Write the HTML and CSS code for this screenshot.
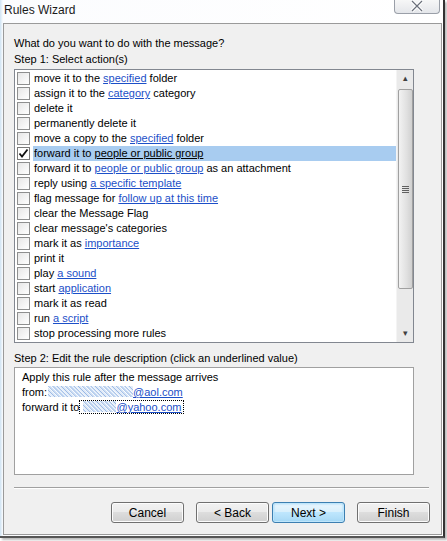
FILE: index.html
```html
<!DOCTYPE html>
<html>
  <head>
    <title>Rules Wizard</title>
    <meta charset="utf-8" />
    <link rel="stylesheet" href="styles.css">
  </head>
  <body>
    <div class="window">
      <div class="title_bar">
        <span class="title_text">Rules Wizard</span>
        <div class="close_button">
          <svg width="14" height="12" viewBox="0 0 14 12">
            <path d="M2 1 L12 11 M12 1 L2 11" stroke="#ffffff" stroke-width="3.2" />
            <path d="M2 1 L12 11 M12 1 L2 11" stroke="#6a6f7a" stroke-width="1.2" />
          </svg>
        </div>
      </div>

      <div class="client">
        <div class="label">What do you want to do with the message?</div>
        <div class="label">Step 1: Select action(s)</div>

        <div class="list_box">
          <div class="list_rows">
            <div class="row"><span class="check"></span><span class="row_text">move it to the <a>specified</a> folder</span></div>
            <div class="row"><span class="check"></span><span class="row_text">assign it to the <a>category</a> category</span></div>
            <div class="row"><span class="check"></span><span class="row_text">delete it</span></div>
            <div class="row"><span class="check"></span><span class="row_text">permanently delete it</span></div>
            <div class="row"><span class="check"></span><span class="row_text">move a copy to the <a>specified</a> folder</span></div>
            <div class="row selected"><span class="check checked">
              <svg width="11" height="11" viewBox="0 0 11 11"><path d="M1.5 5.5 L4 8.5 L9.5 1.5" fill="none" stroke="#111" stroke-width="1.8" /></svg>
            </span><span class="row_text">forward it to <a>people or public group</a></span></div>
            <div class="row"><span class="check"></span><span class="row_text">forward it to <a>people or public group</a> as an attachment</span></div>
            <div class="row"><span class="check"></span><span class="row_text">reply using <a>a specific template</a></span></div>
            <div class="row"><span class="check"></span><span class="row_text">flag message for <a>follow up at this time</a></span></div>
            <div class="row"><span class="check"></span><span class="row_text">clear the Message Flag</span></div>
            <div class="row"><span class="check"></span><span class="row_text">clear message's categories</span></div>
            <div class="row"><span class="check"></span><span class="row_text">mark it as <a>importance</a></span></div>
            <div class="row"><span class="check"></span><span class="row_text">print it</span></div>
            <div class="row"><span class="check"></span><span class="row_text">play <a>a sound</a></span></div>
            <div class="row"><span class="check"></span><span class="row_text">start <a>application</a></span></div>
            <div class="row"><span class="check"></span><span class="row_text">mark it as read</span></div>
            <div class="row"><span class="check"></span><span class="row_text">run <a>a script</a></span></div>
            <div class="row"><span class="check"></span><span class="row_text">stop processing more rules</span></div>
          </div>
          <div class="scrollbar">
            <div class="scroll_arrow">&#9652;</div>
            <div class="scroll_track">
              <div class="scroll_thumb"><span class="grip"></span></div>
            </div>
            <div class="scroll_arrow">&#9662;</div>
          </div>
        </div>

        <div class="label step2">Step 2: Edit the rule description (click an underlined value)</div>
        <div class="desc_box">
          <div>Apply this rule after the message arrives</div>
          <div>from:<span class="blur wide"></span><a>@aol.com</a></div>
          <div>forward it to<span class="focus_box"><span class="blur narrow"></span><a>@yahoo.com</a></span></div>
        </div>

        <div class="separator"></div>

        <div class="button_row">
          <input class="button" type="button" value="Cancel" />
          <input class="button" type="button" value="&lt; Back" />
          <input class="button default" type="button" value="Next &gt;" />
          <input class="button finish" type="button" value="Finish" />
        </div>
      </div>
    </div>
  </body>
</html>
```

FILE: styles.css
```css
* {
  margin: 0;
  padding: 0;
  box-sizing: border-box;
}

input {
  appearance: none;
  -webkit-appearance: none;
}

body {
  background-color: #ffffff;
  color: #000000;
  font-family: "Liberation Sans", Arial, sans-serif;
  font-size: 11px;
  width: 447px;
  height: 541px;
  overflow: hidden;
}

.window {
  width: 445px;
  height: 538px;
  display: flex;
  flex-direction: column;
  background: linear-gradient(to right, #cfe3f3 0px, #fbfcfe 3px, #ffffff 100%);
  border-right: 2px solid #333333;
  border-bottom: 2px solid #555555;
  box-shadow: 2px 2px 2px #bbbbbb;
}

.title_bar {
  height: 23px;
  display: flex;
  justify-content: space-between;
  align-items: flex-start;
  padding-left: 4px;
}

.title_text {
  margin-top: 3px;
  font-size: 12px;
  color: #1a1a1a;
}

.close_button {
  width: 46px;
  height: 15px;
  margin-right: 3px;
  margin-top: -1px;
  border: 1px solid #9a9fa8;
  border-top: none;
  border-radius: 0 0 4px 4px;
  background: linear-gradient(#f8f8f8, #e4e6ea);
  display: flex;
  justify-content: center;
  align-items: center;
}

.client {
  flex: 1;
  margin-left: 3px;
  margin-right: 1px;
  margin-bottom: 1px;
  border: 1px solid #9a9a9a;
  background-color: #f0f0f0;
  padding: 11px 0 0 10px;
  display: flex;
  flex-direction: column;
}

.label {
  height: 16px;
  line-height: 16px;
}

.list_box {
  margin-top: 2px;
  width: 400px;
  height: 274px;
  border: 1px solid #828790;
  background-color: #ffffff;
  display: flex;
}

.list_rows {
  flex: 1;
  padding-top: 1px;
}

.row {
  height: 15px;
  display: flex;
  align-items: center;
  padding-left: 2px;
}

.check {
  width: 13px;
  height: 13px;
  border: 1px solid #8e8f8f;
  background: linear-gradient(135deg, #e6e6e6, #ffffff);
  margin-right: 3px;
  display: flex;
  align-items: center;
  justify-content: center;
}

.checked {
  background: #ffffff;
  border-color: #7a7a7a;
}

.row_text {
  flex: 1;
  height: 15px;
  line-height: 15px;
  padding-left: 1px;
  white-space: nowrap;
}

.row_text a {
  color: #1c4fc8;
  text-decoration: underline;
}

.selected .row_text {
  background-color: #a8ccf0;
}

.selected .row_text a {
  color: #000000;
}

.scrollbar {
  width: 17px;
  display: flex;
  flex-direction: column;
  background-color: #eaeaea;
  border-left: 1px solid #f4f4f4;
}

.scroll_arrow {
  height: 17px;
  text-align: center;
  line-height: 17px;
  font-size: 9px;
  color: #404040;
}

.scroll_track {
  flex: 1;
  padding-top: 2px;
}

.scroll_thumb {
  height: 200px;
  margin: 0 0 0 1px;
  border: 1px solid #a0a0a0;
  border-radius: 2px;
  background: linear-gradient(to right, #f2f2f2, #e0e0e0 60%, #d0d0d0);
  display: flex;
  justify-content: center;
  align-items: center;
}

.grip {
  width: 7px;
  height: 7px;
  background: repeating-linear-gradient(#606060 0px, #606060 1px, transparent 1px, transparent 2px);
}

.step2 {
  margin-top: 7px;
}

.desc_box {
  margin-top: 1px;
  width: 400px;
  height: 108px;
  border: 1px solid #a0a0a0;
  background-color: #ffffff;
  padding: 2px 0 0 7px;
  line-height: 15px;
}

.desc_box a {
  color: #1c4fc8;
  text-decoration: underline;
}

.blur {
  display: inline-block;
  height: 11px;
  vertical-align: -1px;
  background:
    repeating-linear-gradient(45deg, #b9d3f2 0px, #ffffff 1px, #7da6e0 2px, #ffffff 3px),
    #ffffff;
  opacity: 0.8;
}

.wide {
  width: 85px;
  margin-left: 1px;
}

.narrow {
  width: 33px;
  margin-left: 3px;
}

.focus_box {
  border: 1px dotted #000000;
  padding-right: 2px;
}

.separator {
  margin-top: 12px;
  width: 415px;
  height: 2px;
  border-top: 1px solid #a0a0a0;
  border-bottom: 1px solid #ffffff;
}

.button_row {
  margin-top: 13px;
  display: flex;
  padding-left: 97px;
}

.button {
  width: 73px;
  height: 21px;
  margin-right: 3px;
  border: 1px solid #707070;
  border-radius: 3px;
  background: linear-gradient(#f2f2f2 0%, #ebebeb 45%, #dddddd 50%, #cfcfcf 100%);
  font-family: "Liberation Sans", Arial, sans-serif;
  font-size: 12px;
  color: #000000;
  box-shadow: inset 0 0 0 1px #fcfcfc;
}

.button:first-child {
  margin-right: 12px;
}

.default {
  border-color: #3c7fb1;
  box-shadow: inset 0 0 0 1px #bfe6fb, inset 0 0 2px 1px #9ad4f5;
  background: linear-gradient(#eaf6fd 0%, #d9f0fc 45%, #bee6fd 50%, #a7d9f5 100%);
  margin-right: 12px;
}
```
